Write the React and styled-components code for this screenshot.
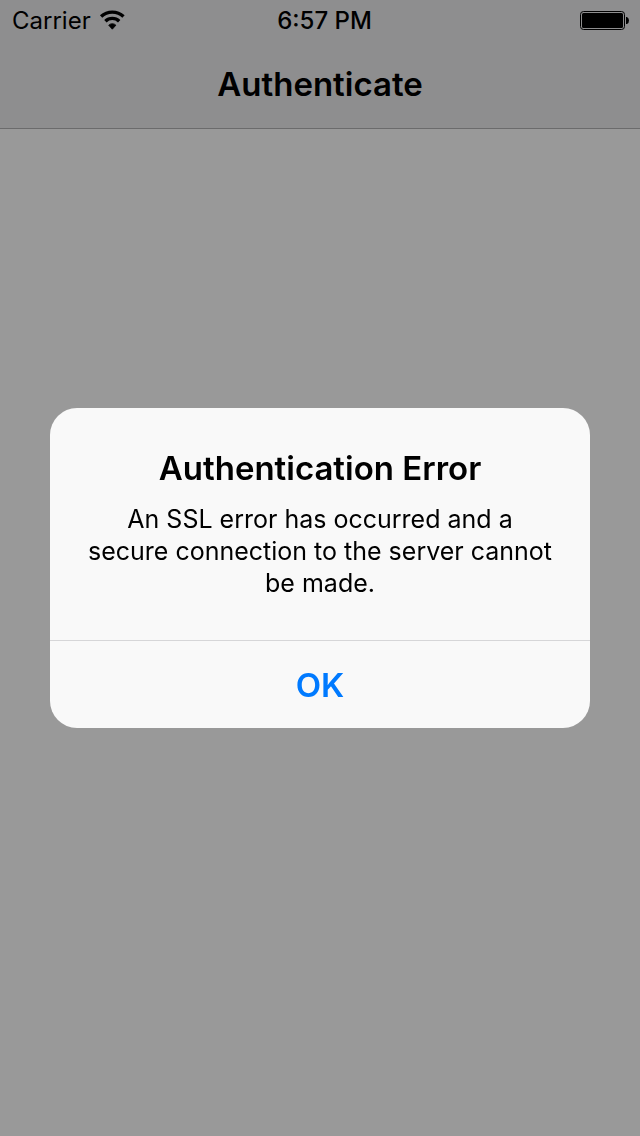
import React from "react";
import styled, { createGlobalStyle } from "styled-components";

const GlobalStyle = createGlobalStyle`
  *, *::before, *::after { box-sizing: border-box; }
  body {
    margin: 0;
    background: #fff;
    color: #000;
    font-family: Inter, "Liberation Sans", sans-serif;
  }
`;

const Screen = styled.div`
  min-height: 100vh;
`;

const Header = styled.header`
  background: #ededef;
  border-bottom: 1px solid #b2b2b4;
`;

const StatusBar = styled.div`
  display: grid;
  grid-template-columns: 1fr auto 1fr;
  align-items: center;
  height: 40px;
  padding: 0 11px 0 12px;
  font-size: 24px;
  line-height: 42px;
`;

const Carrier = styled.div`
  display: flex;
  align-items: center;
  gap: 8px;
`;

const Clock = styled.time`
  padding-left: 8px;
  font-weight: 500;
`;

const BatteryIcon = styled.svg`
  justify-self: end;
`;

const NavBar = styled.div`
  display: flex;
  align-items: center;
  justify-content: center;
  height: 88px;
`;

const NavTitle = styled.h1`
  margin: 0;
  font-size: 33px;
  line-height: 40px;
  font-weight: 600;
`;

const Backdrop = styled.div`
  position: fixed;
  inset: 0;
  display: flex;
  align-items: center;
  justify-content: center;
  padding: 0 50px;
  background: rgba(0, 0, 0, 0.4);
`;

const Alert = styled.section`
  width: 100%;
  max-width: 540px;
  overflow: hidden;
  border-radius: 27px;
  background: #f9f9f9;
  text-align: center;
`;

const AlertBody = styled.div`
  padding: 40px 36px 41px;
`;

const AlertTitle = styled.h2`
  margin: 0 0 15px;
  font-size: 33px;
  line-height: 40px;
  font-weight: 600;
`;

const AlertMessage = styled.p`
  margin: 0;
  font-size: 25px;
  line-height: 32px;
`;

const AlertButton = styled.button`
  display: block;
  width: 100%;
  height: 88px;
  padding: 0;
  border: 0;
  border-top: 1px solid #d6d6d8;
  background: transparent;
  color: #007aff;
  font: inherit;
  font-size: 33px;
  font-weight: 600;
  cursor: pointer;
`;

function Wifi() {
  return (
    <svg width="26" height="22" viewBox="0 0 26 22" role="img" aria-label="Wi-Fi">
      <g fill="none" stroke="#000" strokeWidth="3.4">
        <path d="M2.1 6.6a16.3 16.3 0 0 1 22.4 0" />
        <path d="M6.4 11.2a9.9 9.9 0 0 1 13.800 0" />
      </g>
      <path d="M9.700 15.200a5 5 0 0 1 7.200 0L13.300 19.200z" stroke="#000" strokeWidth="0.8" strokeLinejoin="round" />
    </svg>
  );
}

function Battery() {
  return (
    <BatteryIcon width="49" height="22" viewBox="0 0 49 22" role="img" aria-label="Battery full">
      <rect x="0.5" y="1.5" width="44" height="18" rx="3" fill="none" stroke="#000" />
      <rect x="2" y="3" width="41" height="15" rx="1.5" />
      <path d="M46 7h1q2 1 2 3.500t-2 3.500h-1z" />
    </BatteryIcon>
  );
}

export default function App() {
  return (
    <Screen>
      <GlobalStyle />
      <Header>
        <StatusBar>
          <Carrier>
            <span>Carrier</span>
            <Wifi />
          </Carrier>
          <Clock>6:57 PM</Clock>
          <Battery />
        </StatusBar>
        <NavBar>
          <NavTitle>Authenticate</NavTitle>
        </NavBar>
      </Header>
      <Backdrop>
        <Alert role="alertdialog" aria-modal="true" aria-labelledby="alert-title" aria-describedby="alert-message">
          <AlertBody>
            <AlertTitle id="alert-title">Authentication Error</AlertTitle>
            <AlertMessage id="alert-message">
              An SSL error has occurred and a secure connection to the server cannot be made.
            </AlertMessage>
          </AlertBody>
          <AlertButton type="button">OK</AlertButton>
        </Alert>
      </Backdrop>
    </Screen>
  );
}
